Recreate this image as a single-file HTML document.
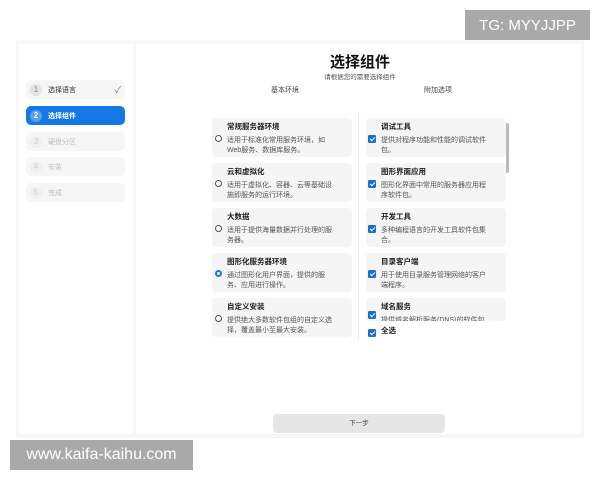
<!DOCTYPE html><html><head><meta charset="utf-8"><style>
*{margin:0;padding:0;box-sizing:border-box}
body{width:600px;height:480px;background:#fff;position:relative;overflow:hidden;font-family:"Liberation Sans","Noto Sans CJK SC",sans-serif;color:#333}
.a{position:absolute}
.frame{left:16px;top:40px;width:568px;height:398px;background:#f7f7f7}
.side{left:19px;top:44px;width:114px;height:390px;background:#fff}
.main{left:136px;top:44px;width:445px;height:390px;background:#fff}
.step{left:26px;width:99px;height:19px;border-radius:5px;background:#f6f6f6;font-size:7px;display:flex;align-items:center;padding-left:4px;color:#bbb}
.step .n{width:12px;height:12px;border-radius:50%;background:#e4e4e4;text-align:center;line-height:12px;margin-right:6px;font-size:8px;color:#aaa}
.card{width:140px;height:39px;background:#f5f5f5;border-radius:4px;font-size:7px;line-height:10px;padding:4px 14px 0 15px;overflow:hidden}
.card b{display:block;font-size:7.5px;color:#222;margin-bottom:4px}
.card span{color:#555}
.radio{position:absolute;left:3px;top:17px;width:7px;height:7px;border:1px solid #555;border-radius:50%;background:#fff}
.chk{position:absolute;left:2px;top:17px;width:8px;height:8px;background:#1a6fc9;border-radius:1.5px}
.chk:after{content:"";position:absolute;left:2.5px;top:0.5px;width:2px;height:4px;border:solid #fff;border-width:0 1.3px 1.3px 0;transform:rotate(45deg)}
.wm{background:#a9a9a9;color:#fff;font-size:15px;display:flex;align-items:center;justify-content:center}
</style></head><body>
<div class="a frame"></div><div class="a side"></div><div class="a main"></div>
<div class="a step" style="top:80px;color:#333"><span class="n" style="color:#888">1</span>选择语言<span style="margin-left:auto;margin-right:4px;color:#777;font-size:9px">✓</span></div>
<div class="a step" style="top:106px;background:#1677e6;color:#fff;font-weight:bold"><span class="n" style="background:#5aa0f0;color:#fff">2</span>选择组件</div>
<div class="a step" style="top:132px"><span class="n" style="background:#f0f0f0;color:#ccc">3</span>硬盘分区</div>
<div class="a step" style="top:157px"><span class="n" style="background:#f0f0f0;color:#ccc">4</span>安装</div>
<div class="a step" style="top:183px"><span class="n" style="background:#f0f0f0;color:#ccc">5</span>完成</div>
<div class="a" style="left:260px;top:51px;width:200px;text-align:center;font-size:15px;font-weight:bold;color:#111">选择组件</div>
<div class="a" style="left:260px;top:71px;width:200px;text-align:center;font-size:6.5px;color:#555">请根据您的需要选择组件</div>
<div class="a" style="left:250px;top:85px;width:70px;text-align:center;font-size:7px;color:#444">基本环境</div>
<div class="a" style="left:403px;top:85px;width:70px;text-align:center;font-size:7px;color:#444">附加选项</div>
<div class="a" style="left:358px;top:112px;width:1px;height:230px;background:#eee"></div>
<div class="a card" style="left:212px;top:118px"><div class="radio"></div><b>常规服务器环境</b><span>适用于标准化常用服务环境，如Web服务、数据库服务。</span></div>
<div class="a card" style="left:212px;top:163px"><div class="radio"></div><b>云和虚拟化</b><span>适用于虚拟化、容器、云等基础设施即服务的运行环境。</span></div>
<div class="a card" style="left:212px;top:208px"><div class="radio"></div><b>大数据</b><span>适用于提供海量数据并行处理的服务器。</span></div>
<div class="a card" style="left:212px;top:253px"><div class="radio" style="border:2px solid #1677e6"></div><b>图形化服务器环境</b><span>通过图形化用户界面，提供的服务、应用进行操作。</span></div>
<div class="a card" style="left:212px;top:298px"><div class="radio"></div><b>自定义安装</b><span>提供绝大多数软件包组的自定义选择，覆盖最小至最大安装。</span></div>
<div class="a card" style="left:366px;top:118px"><div class="chk"></div><b>调试工具</b><span>提供对程序功能和性能的调试软件包。</span></div>
<div class="a card" style="left:366px;top:163px"><div class="chk"></div><b>图形界面应用</b><span>图形化界面中常用的服务器应用程序软件包。</span></div>
<div class="a card" style="left:366px;top:208px"><div class="chk"></div><b>开发工具</b><span>多种编程语言的开发工具软件包集合。</span></div>
<div class="a card" style="left:366px;top:253px"><div class="chk"></div><b>目录客户端</b><span>用于使用目录服务管理网络的客户端程序。</span></div>
<div class="a card" style="left:366px;top:298px;height:23px"><div class="chk" style="top:13px"></div><b>域名服务</b><span>提供域名解析服务(DNS)的软件包</span></div>
<div class="a card" style="left:366px;top:323px;height:18px;background:#fff;padding-top:3px"><div class="chk" style="top:6px"></div><b>全选</b></div>
<div class="a" style="left:506px;top:123px;width:3px;height:50px;background:#bbb;border-radius:2px"></div>
<div class="a" style="left:273px;top:414px;width:172px;height:19px;background:#e6e6e6;border-radius:4px;font-size:6.5px;text-align:center;line-height:19px;color:#444">下一步</div>
<div class="a wm" style="left:465px;top:10px;width:125px;height:30px">TG: MYYJJPP</div>
<div class="a wm" style="left:10px;top:440px;width:183px;height:30px;font-size:16px">www.kaifa-kaihu.com</div>
</body></html>
